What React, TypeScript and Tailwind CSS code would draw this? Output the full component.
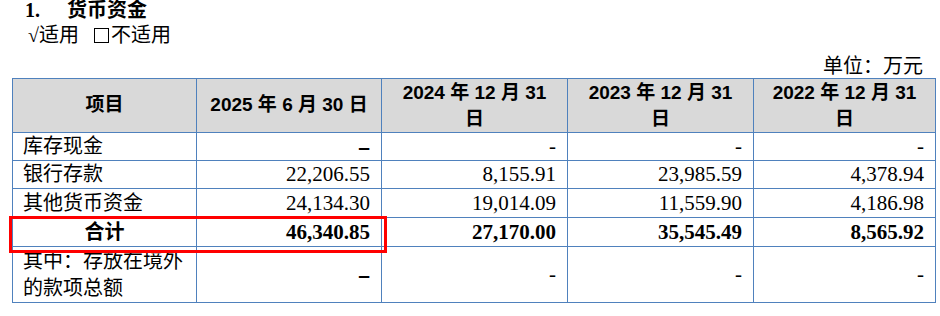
import React from 'react';

const serif = "font-['Liberation_Serif','Noto_Sans_CJK_SC',serif]";
const sans = "font-['Liberation_Sans','Noto_Sans_CJK_SC',sans-serif]";

type Row = {
  label: string[];
  values: string[];
  total?: boolean;
};

const rows: Row[] = [
  { label: ['库存现金'], values: ['–', '-', '-', '-'] },
  { label: ['银行存款'], values: ['22,206.55', '8,155.91', '23,985.59', '4,378.94'] },
  { label: ['其他货币资金'], values: ['24,134.30', '19,014.09', '11,559.90', '4,186.98'] },
  { label: ['合计'], values: ['46,340.85', '27,170.00', '35,545.49', '8,565.92'], total: true },
  { label: ['其中：存放在境外', '的款项总额'], values: ['–', '-', '-', '-'] },
];

const heights = ['h-[27px]', 'h-[28px]', 'h-[29px]', 'h-[29px]', 'h-[56px]'];

export default function App() {
  return (
    <div className={`w-[940px] h-[316px] overflow-hidden bg-white text-black ${serif}`}>
      {/* heading */}
      <div className="flex items-center h-[23px] pl-[25px] text-[20px] font-bold leading-[23px] -mt-[1px]">
        <span className="w-[42px]">1.</span>
        <span>货币资金</span>
      </div>
      <div className="flex items-center h-[27px] pl-[28px] text-[20px] leading-[27px]">
        <span>√适用</span>
        <span className="ml-[15px] inline-block w-[15px] h-[15px] border-[1.5px] border-black" />
        <span className="ml-[2px]">不适用</span>
      </div>
      <div className="flex justify-end h-[29px] pr-[17px] text-[20px] leading-[29px] pt-[3px]">
        单位：万元
      </div>

      {/* table */}
      <div className="relative ml-[12px] w-[923px]">
        <table className="w-[923px] table-fixed border-collapse">
          <colgroup>
            <col className="w-[184px]" />
            <col className="w-[185px]" />
            <col className="w-[186px]" />
            <col className="w-[186px]" />
            <col className="w-[182px]" />
          </colgroup>
          <thead>
            <tr className="h-[54px] bg-[#d9d9d9]">
              <th className={`border border-[#4f81bd] text-[19px] font-bold ${sans}`}>项目</th>
              <th className={`border border-[#4f81bd] text-[19px] font-bold ${sans}`}>2025 年 6 月 30 日</th>
              {['2024', '2023', '2022'].map((y) => (
                <th key={y} className={`border border-[#4f81bd] text-[19px] font-bold leading-[26px] ${sans}`}>
                  {y} 年 12 月 31
                  <br />日
                </th>
              ))}
            </tr>
          </thead>
          <tbody>
            {rows.map((r, i) => (
              <tr key={i} className={heights[i]}>
                <td
                  className={`border border-[#4f81bd] px-[10px] text-[20px] leading-[27px] whitespace-nowrap ${
                    r.total ? 'text-center font-bold' : 'text-left'
                  }`}
                >
                  {r.label.map((l, k) => (
                    <div key={k}>{l}</div>
                  ))}
                </td>
                {r.values.map((v, j) => (
                  <td
                    key={j}
                    className={`border border-[#4f81bd] pr-[11px] text-right text-[21px] leading-[27px] ${
                      r.total ? 'font-bold' : ''
                    } ${v === '–' ? `${sans} font-black text-[20px]` : ''}`}
                  >
                    {v}
                  </td>
                ))}
              </tr>
            ))}
          </tbody>
        </table>
        {/* highlight box */}
        <div className="absolute left-[-3px] top-[138px] w-[378px] h-[37px] border-[3px] border-[#ff0000]" />
      </div>
    </div>
  );
}
